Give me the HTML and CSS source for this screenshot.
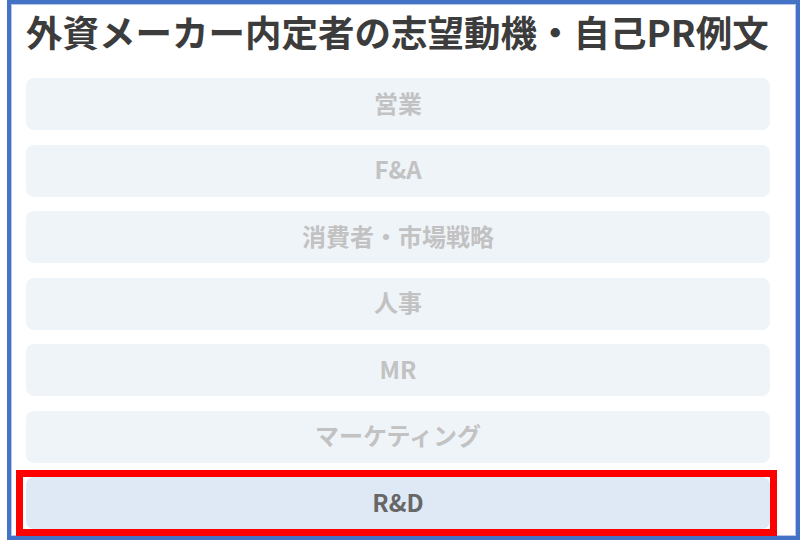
FILE: index.html
```html
<!DOCTYPE html>
<html lang="ja">
<head>
<meta charset="utf-8">
<title>外資メーカー内定者の志望動機・自己PR例文</title>
<link rel="stylesheet" href="styles.css">
</head>
<body>
<div class="frame">
  <h1 class="title">外資メーカー内定者の志望動機・自己PR例文</h1>
  <ul class="tabs">
    <li class="tab">営業</li>
    <li class="tab">F&amp;A</li>
    <li class="tab">消費者・市場戦略</li>
    <li class="tab">人事</li>
    <li class="tab">MR</li>
    <li class="tab">マーケティング</li>
    <li class="tab tab-active">R&amp;D</li>
  </ul>
  <div class="highlight"></div>
</div>
</body>
</html>
```
FILE: styles.css
```css
html, body {
  margin: 0;
  padding: 0;
  background: #ffffff;
}
body {
  font-family: "Noto Sans CJK JP", "Noto Sans", sans-serif;
}
.frame {
  position: relative;
  margin-left: 7px;
  width: 793px;
  height: 540px;
  box-sizing: border-box;
  border: 4px solid #4472c4;
  box-shadow: inset 0 0 0 1px #b4c7e7;
  padding: 5px 26px 0 15px;
}
.title {
  margin: 0;
  font-size: 36.5px;
  line-height: 46px;
  font-weight: 700;
  color: #3c3c3c;
  white-space: nowrap;
  text-align: left;
}
.tabs {
  list-style: none;
  margin: 23px 0 0 0;
  padding: 0;
  display: flex;
  flex-direction: column;
  gap: 14.5px;
}
.tab {
  height: 52px;
  box-sizing: border-box;
  padding-bottom: 4px;
  border-radius: 8px;
  background: #eff4f9;
  color: #c2c2c2;
  font-size: 24px;
  font-weight: 700;
  display: flex;
  align-items: center;
  justify-content: center;
}
.tab-active {
  background: #dee9f5;
  color: #676767;
}
.highlight {
  position: absolute;
  left: 5px;
  top: 466px;
  width: 761px;
  height: 66px;
  box-sizing: border-box;
  border: 7px solid #ff0000;
}
```
